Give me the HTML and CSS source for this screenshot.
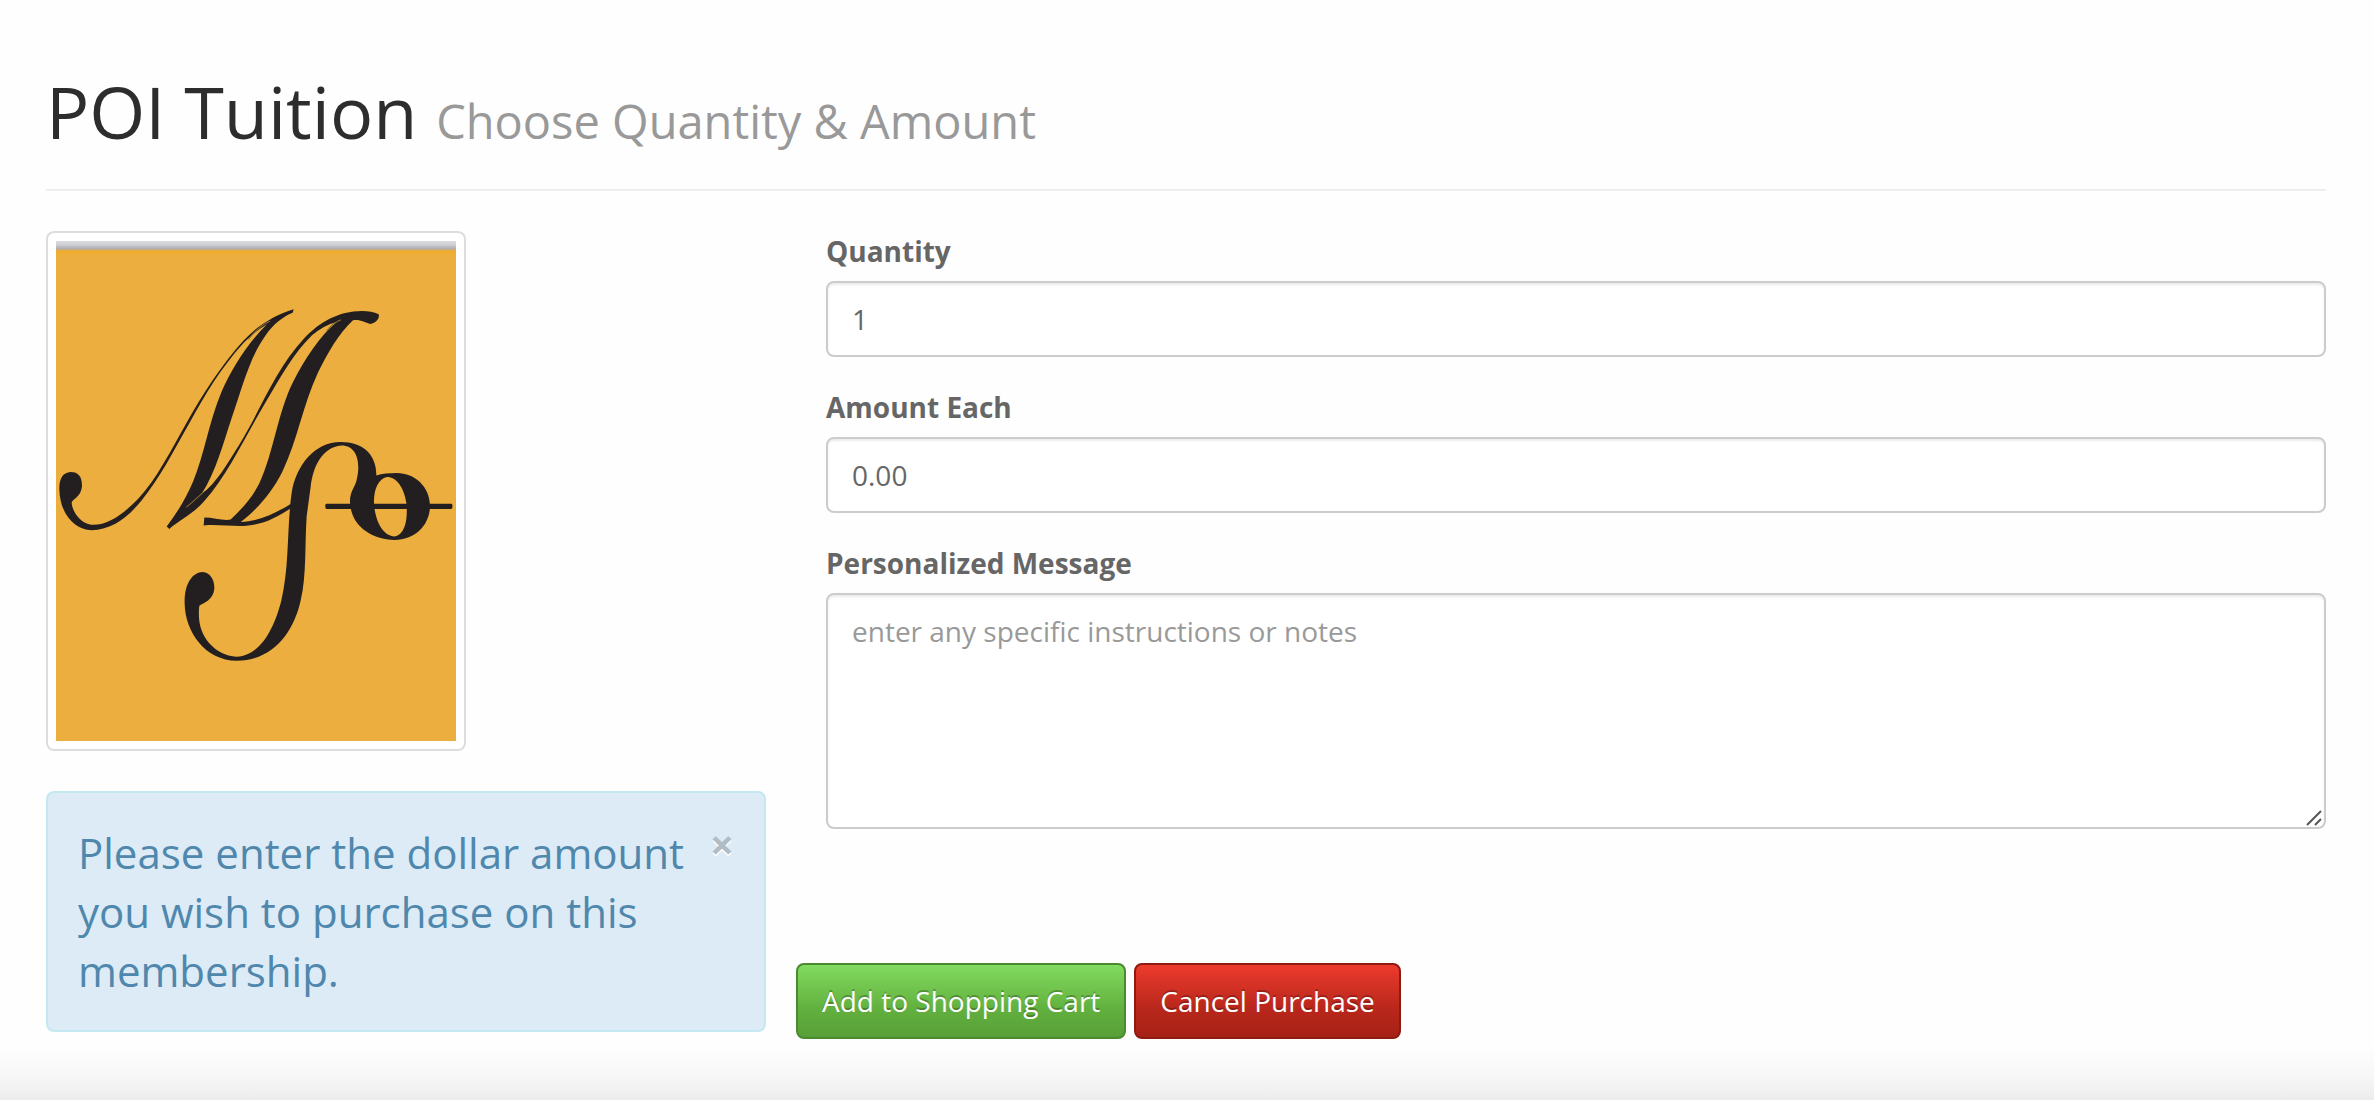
FILE: index.html
```html
<!DOCTYPE html>
<html lang="en">
<head>
<meta charset="utf-8">
<meta name="viewport" content="width=device-width, initial-scale=1">
<title>POI Tuition</title>
<link rel="stylesheet" href="styles.css">
</head>
<body>
<main class="page">
  <header class="page-header">
    <h1 class="title">POI Tuition <small class="subtitle">Choose Quantity &amp; Amount</small></h1>
  </header>
  <form class="row">
    <div class="side">
      <div class="thumbnail">
        <svg class="logo" viewBox="78 61 1200 1452" preserveAspectRatio="none" role="img" aria-label="MSo logo">
          <defs>
            <linearGradient id="edge" x1="0" y1="0" x2="0" y2="1">
              <stop offset="0" stop-color="#dadcdd"/>
              <stop offset=".35" stop-color="#cfd1d4"/>
              <stop offset=".75" stop-color="#aeb0b6"/>
              <stop offset="1" stop-color="#efad2f"/>
            </linearGradient>
          </defs>
          <rect x="78" y="61" width="1200" height="1452" fill="#ecae3e"/>
          <rect x="78" y="88" width="1200" height="12" fill="#f0ad30"/>
          <rect x="78" y="61" width="1200" height="29" fill="url(#edge)"/>
          <g fill="#231f20">
            <path d="M791 259C735 276 683 305 640 351C572 424 517 508 469 590C421 671 379 754 324 810C276 858 230 888 184 885C151 881 127 847 125 822C127 809 153 807 156 772C156 745 145 732 122 732C98 733 88 752 88 781C89 854 135 900 184 901C248 899 293 864 334 815C389 751 430 672 477 592C525 508 572 430 642 356C663 334 686 317 711 303C656 354 608 426 574 500C536 589 523 680 489 760C467 811 439 853 410 890L418 897C447 872 491 853 523 816C596 736 646 627 709 526C752 456 791 386 846 335C869 315 894 302 920 296C869 337 825 403 791 467C742 560 732 674 687 767C664 810 631 843 602 870C579 874 551 864 523 864L521 887C560 884 594 889 630 889C690 889 738 866 786 835L784 823C737 852 690 874 632 877C679 843 727 790 757 731C803 638 819 536 864 443C893 386 926 330 969 291C991 288 1005 298 1021 302C1035 299 1050 288 1046 274C1032 266 1015 264 996 264C926 264 868 297 824 342C735 435 698 540 630 649C594 705 558 766 515 795C557 733 579 650 605 575C637 487 658 401 706 336C730 302 759 280 788 269Z"/>
            <path d="M830 860C824 947 830 1031 812 1105C792 1193 733 1279 620 1280C526 1279 466 1197 464 1115C462 1056 487 1023 518 1022C541 1024 554 1044 553 1071C550 1104 521 1112 508 1120C505 1142 506 1170 515 1192C532 1236 575 1267 621 1268C694 1264 734 1182 754 1105C779 1002 770 895 785 792C799 712 854 645 932 645C1000 645 1040 683 1039 742C1056 737 1077 735 1100 735C1156 735 1199 776 1200 829C1200 887 1154 929 1094 929C1021 927 963 887 960 820C959 786 977 776 981 750C991 709 984 655 934 655C875 661 849 717 842 775ZM1071 746C1043 752 1031 784 1032 822C1035 876 1060 918 1094 919C1126 914 1134 868 1129 821C1122 776 1099 746 1071 746Z" fill-rule="evenodd"/>
            <rect x="886" y="824" width="381" height="15" rx="4"/>
          </g>
          <path d="M720 294C695 304 675 322 655 347M933 290C914 297 901 307 889 324M517 793C500 808 483 823 469 834" fill="none" stroke="#8a6c31" stroke-width="3"/>
        </svg>
      </div>
      <div class="alert" role="alert">
        <p class="alert-text">Please enter the dollar amount you wish to purchase on this membership.</p>
        <button class="close" type="button" aria-label="Close">×</button>
      </div>
    </div>
    <div class="main">
      <div class="fields">
        <div class="field">
          <label class="label" for="quantity">Quantity</label>
          <input class="control" id="quantity" type="text" value="1">
        </div>
        <div class="field">
          <label class="label" for="amount">Amount Each</label>
          <input class="control" id="amount" type="text" value="0.00">
        </div>
        <div class="field">
          <label class="label" for="message">Personalized Message</label>
          <div class="message-box">
            <textarea class="control message" id="message" placeholder="enter any specific instructions or notes"></textarea>
            <svg class="grip" viewBox="0 0 16 16" aria-hidden="true">
              <path d="M1 15L15 1M9 15L15 9" fill="none" stroke="#555" stroke-width="2"/>
            </svg>
          </div>
        </div>
      </div>
      <div class="actions">
        <button class="btn btn-add" type="submit">Add to Shopping Cart</button>
        <button class="btn btn-cancel" type="button">Cancel Purchase</button>
      </div>
    </div>
  </form>
</main>
<div class="page-shade"></div>
</body>
</html>
```
FILE: styles.css
```css
* {
  box-sizing: border-box;
}

body {
  display: flex;
  flex-direction: column;
  min-height: 100vh;
  margin: 0;
  background: #fefefe;
  color: #666;
  font-family: "Open Sans", "Noto Sans", sans-serif;
  font-size: 28px;
  line-height: 40px;
}

.page {
  padding: 71px 48px 0 46px;
}

.page-header {
  padding-bottom: 38px;
  margin-bottom: 40px;
  border-bottom: 2px solid #eee;
}

.title {
  margin: 0;
  color: #2d2d2d;
  font-size: 72px;
  font-weight: 400;
  line-height: 80px;
}

.subtitle {
  color: #999;
  font-size: 47px;
  font-weight: 400;
  line-height: 1;
}

.row {
  display: grid;
  grid-template-columns: 8fr 17fr;
  column-gap: 30px;
  margin: 0;
}

.thumbnail {
  width: 420px;
  max-width: 100%;
  margin-bottom: 40px;
  padding: 8px;
  border: 2px solid #ddd;
  border-radius: 8px;
  background: #fff;
}

.logo {
  display: block;
  width: 100%;
  height: 500px;
}

.alert {
  display: flex;
  align-items: flex-start;
  padding: 30px;
  border: 2px solid #c4e8f0;
  border-radius: 8px;
  background: #dcebf6;
  color: #4f87ad;
}

.alert-text {
  flex: 1;
  margin: 0;
  font-size: 42px;
  line-height: 59px;
}

.close {
  padding: 0;
  border: 0;
  background: none;
  color: #b0bdc5;
  font-family: inherit;
  font-size: 42px;
  font-weight: 700;
  line-height: 42px;
  text-shadow: 0 2px 0 #fff;
}

.main {
  display: flex;
  flex-direction: column;
}

.fields {
  display: flex;
  flex-direction: column;
  gap: 30px;
  padding-left: 30px;
}

.field {
  display: flex;
  flex-direction: column;
  gap: 10px;
}

.label {
  font-weight: 700;
}

.control {
  width: 100%;
  height: 76px;
  margin: 0;
  padding: 16px 24px;
  border: 2px solid #ccc;
  border-radius: 8px;
  background: #fff;
  box-shadow: inset 0 2px 2px rgba(0, 0, 0, .075);
  color: #666;
  font: inherit;
}

.message-box {
  position: relative;
}

.message {
  display: block;
  height: 236px;
  resize: vertical;
}

.message::placeholder {
  color: #999;
}

.message::-webkit-resizer {
  background: transparent;
}

.grip {
  position: absolute;
  right: 4px;
  bottom: 3px;
  width: 16px;
  height: 16px;
  pointer-events: none;
}

.actions {
  display: flex;
  gap: 8px;
  margin-top: 134px;
}

.btn {
  height: 76px;
  padding: 0 24px;
  border: 2px solid;
  border-radius: 8px;
  color: #fff;
  font: inherit;
  text-shadow: 0 -2px 0 rgba(0, 0, 0, .25);
}

.btn-add {
  border-color: #4c8a30;
  background: linear-gradient(#83db60, #62b13f 60%, #589f38);
}

.btn-cancel {
  border-color: #8d1b12;
  background: linear-gradient(#ed3b2e, #b9271b 60%, #a72116);
}

.page-shade {
  height: 54px;
  margin-top: auto;
  background: linear-gradient(#fefefe, #f7f7f7 55%, #ececec);
}
```
